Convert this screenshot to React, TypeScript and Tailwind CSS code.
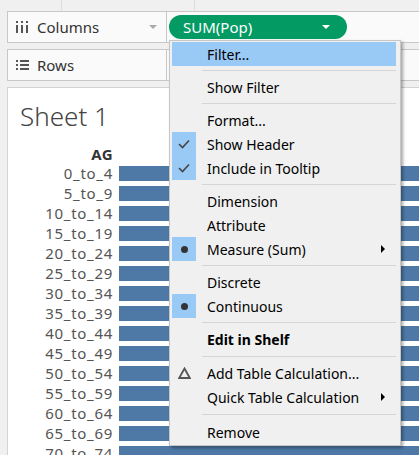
import React from 'react';

const font = { fontFamily: '"Noto Sans", "Open Sans", sans-serif' };

const ages = [
  '0_to_4', '5_to_9', '10_to_14', '15_to_19', '20_to_24', '25_to_29', '30_to_34', '35_to_39',
  '40_to_44', '45_to_49', '50_to_54', '55_to_59', '60_to_64', '65_to_69', '70_to_74',
];

type Item =
  | { kind: 'sep'; h: string }
  | { kind: 'item'; label: string; icon?: 'check' | 'dot' | 'delta'; active?: boolean; arrow?: boolean; bold?: boolean };

const menu: Item[] = [
  { kind: 'item', label: 'Filter...', active: true },
  { kind: 'sep', h: 'h-[9px]' },
  { kind: 'item', label: 'Show Filter' },
  { kind: 'sep', h: 'h-[9px]' },
  { kind: 'item', label: 'Format...' },
  { kind: 'item', label: 'Show Header', icon: 'check' },
  { kind: 'item', label: 'Include in Tooltip', icon: 'check' },
  { kind: 'sep', h: 'h-[9px]' },
  { kind: 'item', label: 'Dimension' },
  { kind: 'item', label: 'Attribute' },
  { kind: 'item', label: 'Measure (Sum)', icon: 'dot', arrow: true },
  { kind: 'sep', h: 'h-[9px]' },
  { kind: 'item', label: 'Discrete' },
  { kind: 'item', label: 'Continuous', icon: 'dot' },
  { kind: 'sep', h: 'h-[9px]' },
  { kind: 'item', label: 'Edit in Shelf', bold: true },
  { kind: 'sep', h: 'h-[10px]' },
  { kind: 'item', label: 'Add Table Calculation...', icon: 'delta' },
  { kind: 'item', label: 'Quick Table Calculation', arrow: true },
  { kind: 'sep', h: 'h-[11px]' },
  { kind: 'item', label: 'Remove' },
];

function ColumnsIcon() {
  return (
    <svg width="12" height="12" viewBox="0 0 12 12" className="text-[#555]">
      <rect x="0" y="0" width="2" height="2" fill="currentColor" />
      <rect x="5" y="0" width="2" height="2" fill="currentColor" />
      <rect x="10" y="0" width="2" height="2" fill="currentColor" />
      <rect x="0" y="4" width="2" height="8" fill="currentColor" />
      <rect x="5" y="4" width="2" height="8" fill="currentColor" />
      <rect x="10" y="4" width="2" height="8" fill="currentColor" />
    </svg>
  );
}

function RowsIcon() {
  return (
    <svg width="13" height="10" viewBox="0 0 13 10" className="text-[#555]">
      <rect x="0" y="0" width="2" height="2" fill="currentColor" />
      <rect x="4" y="0" width="9" height="2" fill="currentColor" />
      <rect x="0" y="4" width="2" height="2" fill="currentColor" />
      <rect x="4" y="4" width="9" height="2" fill="currentColor" />
      <rect x="0" y="8" width="2" height="2" fill="currentColor" />
      <rect x="4" y="8" width="9" height="2" fill="currentColor" />
    </svg>
  );
}

function Caret({ color }: { color: string }) {
  return (
    <svg width="8" height="4" viewBox="0 0 8 4">
      <path d="M0 0 L8 0 L4 4 Z" fill={color} />
    </svg>
  );
}

function MenuIcon({ icon }: { icon: 'check' | 'dot' | 'delta' }) {
  if (icon === 'check')
    return (
      <svg width="12" height="10" viewBox="0 0 12 10">
        <path d="M1 5 L4.5 8.5 L11 1.5" fill="none" stroke="#444" strokeWidth="1.6" />
      </svg>
    );
  if (icon === 'dot') return <div className="w-[7px] h-[7px] rounded-full bg-[#333]" />;
  return (
    <svg width="13" height="12" viewBox="0 0 13 12">
      <path d="M6.5 1.5 L11.8 11 L1.2 11 Z" fill="none" stroke="#555" strokeWidth="1.8" strokeLinejoin="miter" />
    </svg>
  );
}

function ContextMenu() {
  return (
    <div className="absolute left-[169px] top-[40px] w-[232px] bg-[#f0f0f0] border border-[#c6c6c6] pt-[1px] pb-[1px] px-[2px] shadow-[2px_2px_3px_rgba(0,0,0,0.35)]">
      {menu.map((m, i) =>
        m.kind === 'sep' ? (
          <div key={i} className={`${m.h} flex items-center pl-[30px] pr-[2px]`}>
            <div className="h-px w-full bg-[#d5d5d5]" />
          </div>
        ) : (
          <div
            key={i}
            className={`h-[24px] flex items-center mr-[2px] ${m.active ? 'bg-[#99c9f5]' : ''}`}
          >
            <div className={`w-[24px] h-full flex items-center justify-center ${m.icon && m.icon !== 'delta' ? 'bg-[#99c9f5]' : ''}`}>
              {m.icon && <MenuIcon icon={m.icon} />}
            </div>
            <span className={`ml-[11px] flex-1 text-[14px] text-black ${m.bold ? 'font-bold' : ''}`}>{m.label}</span>
            {m.arrow && (
              <svg width="4" height="8" viewBox="0 0 4 8" className="mr-[11px]">
                <path d="M0 0 L4 4 L0 8 Z" fill="#000" />
              </svg>
            )}
          </div>
        )
      )}
    </div>
  );
}

export default function App() {
  return (
    <div className="relative w-[419px] h-[455px] overflow-hidden bg-[#f0f0f0] flex flex-col" style={font}>
      {/* top strip */}
      <div className="h-[11px] flex shrink-0">
        <div className="w-[62px] border-r border-[#dcdcdc]" />
        <div className="w-[133px] border-r border-[#dcdcdc]" />
      </div>

      {/* Columns shelf */}
      <div className="h-[32px] flex shrink-0 pl-[7px]">
        <div className="w-[160px] border border-[#c8c8c8] bg-[#fafafa] flex items-center pl-[8px] pr-[9px]">
          <ColumnsIcon />
          <span className="ml-[9px] text-[15px] text-[#333] flex-1">Columns</span>
          <Caret color="#aaa" />
        </div>
        <div className="flex-1 border-y border-[#c8c8c8] bg-[#fafafa] flex items-center pl-[2px]">
          <div className="w-[178px] h-[24px] rounded-full bg-[#039a63] flex items-center pl-[14px] pr-[17px]">
            <span className="flex-1 text-[15px] text-white">SUM(Pop)</span>
            <Caret color="#fff" />
          </div>
        </div>
      </div>

      {/* Rows shelf */}
      <div className="h-[32px] flex shrink-0 pl-[7px] mt-[6px]">
        <div className="w-[160px] border border-[#c8c8c8] bg-[#fafafa] flex items-center pl-[8px]">
          <RowsIcon />
          <span className="ml-[8px] text-[15px] text-[#333]">Rows</span>
        </div>
        <div className="flex-1 border-y border-[#c8c8c8] bg-[#fafafa]" />
      </div>

      {/* Sheet */}
      <div className="flex-1 ml-[7px] mt-[6px] bg-white border-l border-t border-[#d4d4d4] flex flex-col">
        <div className="pl-[12px] pt-[12px] h-[56px] text-[26px] font-light text-[#444] leading-[32px]">Sheet 1</div>
        <div className="flex">
          <div className="w-[105px] text-right text-[15px] font-bold text-[#333] h-[21px] leading-[20px] tracking-wide">AG</div>
        </div>
        <div className="flex flex-col gap-[5px] mt-[1px]">
          {ages.map((a) => (
            <div key={a} className="flex h-[15px] items-center">
              <div className="w-[105px] text-right text-[15px] text-[#555] leading-[15px] tracking-[0.7px]">{a}</div>
              <div className="ml-[6px] flex-1 h-[15px] bg-[#4e79a7]" />
            </div>
          ))}
        </div>
      </div>

      <ContextMenu />
    </div>
  );
}
